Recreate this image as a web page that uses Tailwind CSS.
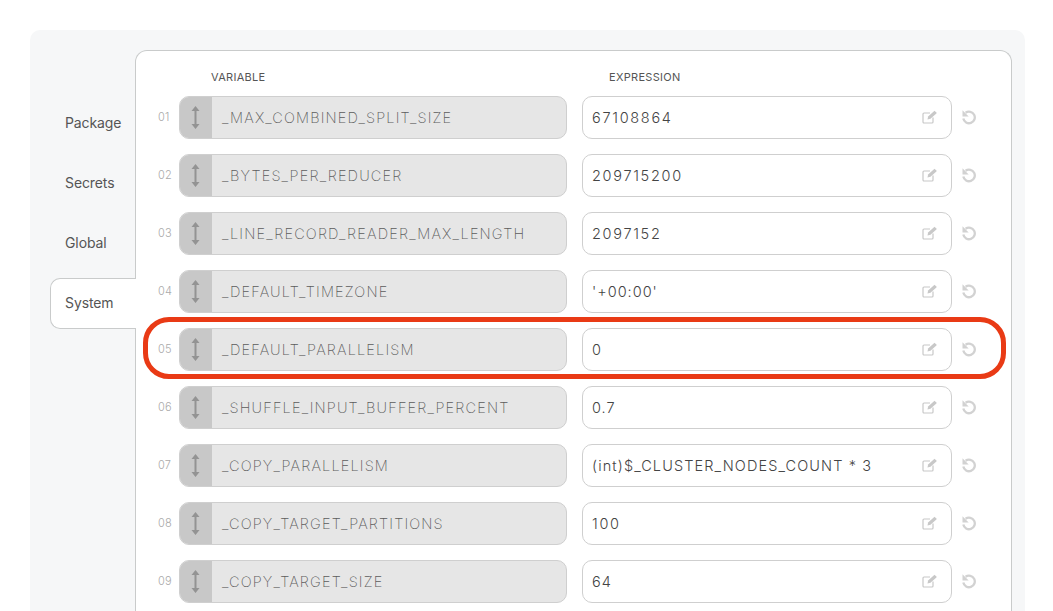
<!DOCTYPE html>
<html>
	<head>
		<meta charset="utf-8" />
		<title>Variables</title>
		<script src="https://cdn.jsdelivr.net/npm/@tailwindcss/browser@4"></script>
	</head>
	<body class="bg-white w-[1053px] h-[611px] overflow-hidden font-['Inter','Noto_Sans',sans-serif]">
		<div class="pt-[30px] pl-[30px] w-[1025px] h-[611px]">
			<div class="relative flex bg-[#f6f7f8] rounded-t-[10px] h-[581px] pt-[20px] pr-[13px]">
				<!-- tabs -->
				<div class="relative z-10 w-[105px] shrink-0 pl-[20px] pt-[42px] flex flex-col items-stretch text-[14px] text-[#555]">
					<div class="h-[60px] pl-[15px] flex items-center tracking-[-0.1px]">Package</div>
					<div class="h-[60px] pl-[15px] flex items-center tracking-[-0.1px]">Secrets</div>
					<div class="h-[60px] pl-[15px] flex items-center tracking-[-0.1px]">Global</div>
					<div class="w-[86px] h-[51px] mt-[6px] pb-[2px] pl-[14px] flex items-center tracking-[-0.1px] bg-white border border-r-0 border-[#c9cbcb] rounded-l-[10px]">System</div>
				</div>
				<!-- card -->
				<div class="flex-1 bg-white border border-b-0 border-[#c9cbcb] rounded-t-[12px] pl-[22px]">
					<div class="flex h-[45px] ml-[21px] items-end pb-[11px] text-[11px] tracking-[0.3px] text-[#555]">
						<span class="w-[403px] pl-[32px]">VARIABLE</span>
						<span class="pl-[27px]">EXPRESSION</span>
					</div>
					<div id="rows" class="flex flex-col gap-[15px]">
						<div class="flex items-center h-[43px]">
							<span class="w-[21px] shrink-0 text-[11px] font-light text-[#aaa] tracking-[0.2px]">01</span>
							<div class="flex w-[388px] h-[43px] rounded-[10px] overflow-hidden bg-[#e6e6e6] border border-[#cfcfcf]">
								<div class="w-[33px] -ml-px -my-px shrink-0 bg-[#c8c8c8] flex items-center justify-center">
									<svg width="9" height="23" viewBox="0 0 9 23" fill="#939393"><path d="M4.5 0 8.5 5H5.5v13h3l-4 5-4-5h3V5h-3z"/></svg>
								</div>
								<div class="pl-[10px] pt-px flex items-center text-[14.5px] leading-[20px] tracking-[1.16px] text-[#5c5c5c] font-extralight">_MAX_COMBINED_SPLIT_SIZE</div>
							</div>
							<div class="flex items-center justify-between w-[370px] h-[43px] ml-[15px] pl-[9px] pr-[13px] rounded-[10px] bg-white border border-[#cfcfcf] text-[14.5px] leading-[20px] font-light tracking-[1.7px] text-[#444]">
								<span class="pt-px">67108864</span>
								<svg class="mb-[2px]" width="16" height="14" viewBox="0 0 16 14" fill="none" stroke="#c8c8c8" stroke-width="1.2"><path d="M11 7.5V12a1 1 0 0 1-1 1H2a1 1 0 0 1-1-1V4a1 1 0 0 1 1-1h6"/><path d="M5.5 9.5l.6-3L12.5 .8l2.4 2.2L8.5 8.8z" fill="#c8c8c8" stroke="none"/></svg>
							</div>
							<svg class="ml-[9px] mb-[2px]" width="16" height="16" viewBox="0 0 16 16" fill="none" stroke="#d2d2d2" stroke-width="2.3"><path d="M4.6 3.7A5.8 5.8 0 1 1 2.3 9.6"/><path d="M1.5 1.2V7.4H7.7z" stroke="none" fill="#d2d2d2"/></svg>
						</div>
						<div class="flex items-center h-[43px]">
							<span class="w-[21px] shrink-0 text-[11px] font-light text-[#aaa] tracking-[0.2px]">02</span>
							<div class="flex w-[388px] h-[43px] rounded-[10px] overflow-hidden bg-[#e6e6e6] border border-[#cfcfcf]">
								<div class="w-[33px] -ml-px -my-px shrink-0 bg-[#c8c8c8] flex items-center justify-center">
									<svg width="9" height="23" viewBox="0 0 9 23" fill="#939393"><path d="M4.5 0 8.5 5H5.5v13h3l-4 5-4-5h3V5h-3z"/></svg>
								</div>
								<div class="pl-[10px] pt-px flex items-center text-[14.5px] leading-[20px] tracking-[1.16px] text-[#5c5c5c] font-extralight">_BYTES_PER_REDUCER</div>
							</div>
							<div class="flex items-center justify-between w-[370px] h-[43px] ml-[15px] pl-[9px] pr-[13px] rounded-[10px] bg-white border border-[#cfcfcf] text-[14.5px] leading-[20px] font-light tracking-[1.7px] text-[#444]">
								<span class="pt-px">209715200</span>
								<svg class="mb-[2px]" width="16" height="14" viewBox="0 0 16 14" fill="none" stroke="#c8c8c8" stroke-width="1.2"><path d="M11 7.5V12a1 1 0 0 1-1 1H2a1 1 0 0 1-1-1V4a1 1 0 0 1 1-1h6"/><path d="M5.5 9.5l.6-3L12.5 .8l2.4 2.2L8.5 8.8z" fill="#c8c8c8" stroke="none"/></svg>
							</div>
							<svg class="ml-[9px] mb-[2px]" width="16" height="16" viewBox="0 0 16 16" fill="none" stroke="#d2d2d2" stroke-width="2.3"><path d="M4.6 3.7A5.8 5.8 0 1 1 2.3 9.6"/><path d="M1.5 1.2V7.4H7.7z" stroke="none" fill="#d2d2d2"/></svg>
						</div>
						<div class="flex items-center h-[43px]">
							<span class="w-[21px] shrink-0 text-[11px] font-light text-[#aaa] tracking-[0.2px]">03</span>
							<div class="flex w-[388px] h-[43px] rounded-[10px] overflow-hidden bg-[#e6e6e6] border border-[#cfcfcf]">
								<div class="w-[33px] -ml-px -my-px shrink-0 bg-[#c8c8c8] flex items-center justify-center">
									<svg width="9" height="23" viewBox="0 0 9 23" fill="#939393"><path d="M4.5 0 8.5 5H5.5v13h3l-4 5-4-5h3V5h-3z"/></svg>
								</div>
								<div class="pl-[10px] pt-px flex items-center text-[14.5px] leading-[20px] tracking-[1.16px] text-[#5c5c5c] font-extralight">_LINE_RECORD_READER_MAX_LENGTH</div>
							</div>
							<div class="flex items-center justify-between w-[370px] h-[43px] ml-[15px] pl-[9px] pr-[13px] rounded-[10px] bg-white border border-[#cfcfcf] text-[14.5px] leading-[20px] font-light tracking-[1.7px] text-[#444]">
								<span class="pt-px">2097152</span>
								<svg class="mb-[2px]" width="16" height="14" viewBox="0 0 16 14" fill="none" stroke="#c8c8c8" stroke-width="1.2"><path d="M11 7.5V12a1 1 0 0 1-1 1H2a1 1 0 0 1-1-1V4a1 1 0 0 1 1-1h6"/><path d="M5.5 9.5l.6-3L12.5 .8l2.4 2.2L8.5 8.8z" fill="#c8c8c8" stroke="none"/></svg>
							</div>
							<svg class="ml-[9px] mb-[2px]" width="16" height="16" viewBox="0 0 16 16" fill="none" stroke="#d2d2d2" stroke-width="2.3"><path d="M4.6 3.7A5.8 5.8 0 1 1 2.3 9.6"/><path d="M1.5 1.2V7.4H7.7z" stroke="none" fill="#d2d2d2"/></svg>
						</div>
						<div class="flex items-center h-[43px]">
							<span class="w-[21px] shrink-0 text-[11px] font-light text-[#aaa] tracking-[0.2px]">04</span>
							<div class="flex w-[388px] h-[43px] rounded-[10px] overflow-hidden bg-[#e6e6e6] border border-[#cfcfcf]">
								<div class="w-[33px] -ml-px -my-px shrink-0 bg-[#c8c8c8] flex items-center justify-center">
									<svg width="9" height="23" viewBox="0 0 9 23" fill="#939393"><path d="M4.5 0 8.5 5H5.5v13h3l-4 5-4-5h3V5h-3z"/></svg>
								</div>
								<div class="pl-[10px] pt-px flex items-center text-[14.5px] leading-[20px] tracking-[1.16px] text-[#5c5c5c] font-extralight">_DEFAULT_TIMEZONE</div>
							</div>
							<div class="flex items-center justify-between w-[370px] h-[43px] ml-[15px] pl-[9px] pr-[13px] rounded-[10px] bg-white border border-[#cfcfcf] text-[14.5px] leading-[20px] font-light tracking-[1px] text-[#444]">
								<span class="pt-px">'+00:00'</span>
								<svg class="mb-[2px]" width="16" height="14" viewBox="0 0 16 14" fill="none" stroke="#c8c8c8" stroke-width="1.2"><path d="M11 7.5V12a1 1 0 0 1-1 1H2a1 1 0 0 1-1-1V4a1 1 0 0 1 1-1h6"/><path d="M5.5 9.5l.6-3L12.5 .8l2.4 2.2L8.5 8.8z" fill="#c8c8c8" stroke="none"/></svg>
							</div>
							<svg class="ml-[9px] mb-[2px]" width="16" height="16" viewBox="0 0 16 16" fill="none" stroke="#d2d2d2" stroke-width="2.3"><path d="M4.6 3.7A5.8 5.8 0 1 1 2.3 9.6"/><path d="M1.5 1.2V7.4H7.7z" stroke="none" fill="#d2d2d2"/></svg>
						</div>
						<div class="flex items-center h-[43px]">
							<span class="w-[21px] shrink-0 text-[11px] font-light text-[#aaa] tracking-[0.2px]">05</span>
							<div class="flex w-[388px] h-[43px] rounded-[10px] overflow-hidden bg-[#e6e6e6] border border-[#cfcfcf]">
								<div class="w-[33px] -ml-px -my-px shrink-0 bg-[#c8c8c8] flex items-center justify-center">
									<svg width="9" height="23" viewBox="0 0 9 23" fill="#939393"><path d="M4.5 0 8.5 5H5.5v13h3l-4 5-4-5h3V5h-3z"/></svg>
								</div>
								<div class="pl-[10px] pt-px flex items-center text-[14.5px] leading-[20px] tracking-[1.16px] text-[#5c5c5c] font-extralight">_DEFAULT_PARALLELISM</div>
							</div>
							<div class="flex items-center justify-between w-[370px] h-[43px] ml-[15px] pl-[9px] pr-[13px] rounded-[10px] bg-white border border-[#cfcfcf] text-[14.5px] leading-[20px] font-light tracking-[1px] text-[#444]">
								<span class="pt-px">0</span>
								<svg class="mb-[2px]" width="16" height="14" viewBox="0 0 16 14" fill="none" stroke="#c8c8c8" stroke-width="1.2"><path d="M11 7.5V12a1 1 0 0 1-1 1H2a1 1 0 0 1-1-1V4a1 1 0 0 1 1-1h6"/><path d="M5.5 9.5l.6-3L12.5 .8l2.4 2.2L8.5 8.8z" fill="#c8c8c8" stroke="none"/></svg>
							</div>
							<svg class="ml-[9px] mb-[2px]" width="16" height="16" viewBox="0 0 16 16" fill="none" stroke="#d2d2d2" stroke-width="2.3"><path d="M4.6 3.7A5.8 5.8 0 1 1 2.3 9.6"/><path d="M1.5 1.2V7.4H7.7z" stroke="none" fill="#d2d2d2"/></svg>
						</div>
						<div class="flex items-center h-[43px]">
							<span class="w-[21px] shrink-0 text-[11px] font-light text-[#aaa] tracking-[0.2px]">06</span>
							<div class="flex w-[388px] h-[43px] rounded-[10px] overflow-hidden bg-[#e6e6e6] border border-[#cfcfcf]">
								<div class="w-[33px] -ml-px -my-px shrink-0 bg-[#c8c8c8] flex items-center justify-center">
									<svg width="9" height="23" viewBox="0 0 9 23" fill="#939393"><path d="M4.5 0 8.5 5H5.5v13h3l-4 5-4-5h3V5h-3z"/></svg>
								</div>
								<div class="pl-[10px] pt-px flex items-center text-[14.5px] leading-[20px] tracking-[1.16px] text-[#5c5c5c] font-extralight">_SHUFFLE_INPUT_BUFFER_PERCENT</div>
							</div>
							<div class="flex items-center justify-between w-[370px] h-[43px] ml-[15px] pl-[9px] pr-[13px] rounded-[10px] bg-white border border-[#cfcfcf] text-[14.5px] leading-[20px] font-light tracking-[1px] text-[#444]">
								<span class="pt-px">0.7</span>
								<svg class="mb-[2px]" width="16" height="14" viewBox="0 0 16 14" fill="none" stroke="#c8c8c8" stroke-width="1.2"><path d="M11 7.5V12a1 1 0 0 1-1 1H2a1 1 0 0 1-1-1V4a1 1 0 0 1 1-1h6"/><path d="M5.5 9.5l.6-3L12.5 .8l2.4 2.2L8.5 8.8z" fill="#c8c8c8" stroke="none"/></svg>
							</div>
							<svg class="ml-[9px] mb-[2px]" width="16" height="16" viewBox="0 0 16 16" fill="none" stroke="#d2d2d2" stroke-width="2.3"><path d="M4.6 3.7A5.8 5.8 0 1 1 2.3 9.6"/><path d="M1.5 1.2V7.4H7.7z" stroke="none" fill="#d2d2d2"/></svg>
						</div>
						<div class="flex items-center h-[43px]">
							<span class="w-[21px] shrink-0 text-[11px] font-light text-[#aaa] tracking-[0.2px]">07</span>
							<div class="flex w-[388px] h-[43px] rounded-[10px] overflow-hidden bg-[#e6e6e6] border border-[#cfcfcf]">
								<div class="w-[33px] -ml-px -my-px shrink-0 bg-[#c8c8c8] flex items-center justify-center">
									<svg width="9" height="23" viewBox="0 0 9 23" fill="#939393"><path d="M4.5 0 8.5 5H5.5v13h3l-4 5-4-5h3V5h-3z"/></svg>
								</div>
								<div class="pl-[10px] pt-px flex items-center text-[14.5px] leading-[20px] tracking-[1.16px] text-[#5c5c5c] font-extralight">_COPY_PARALLELISM</div>
							</div>
							<div class="flex items-center justify-between w-[370px] h-[43px] ml-[15px] pl-[9px] pr-[13px] rounded-[10px] bg-white border border-[#cfcfcf] text-[14.5px] leading-[20px] font-light tracking-[1.11px] text-[#444]">
								<span class="pt-px">(int)$_CLUSTER_NODES_COUNT * 3</span>
								<svg class="mb-[2px]" width="16" height="14" viewBox="0 0 16 14" fill="none" stroke="#c8c8c8" stroke-width="1.2"><path d="M11 7.5V12a1 1 0 0 1-1 1H2a1 1 0 0 1-1-1V4a1 1 0 0 1 1-1h6"/><path d="M5.5 9.5l.6-3L12.5 .8l2.4 2.2L8.5 8.8z" fill="#c8c8c8" stroke="none"/></svg>
							</div>
							<svg class="ml-[9px] mb-[2px]" width="16" height="16" viewBox="0 0 16 16" fill="none" stroke="#d2d2d2" stroke-width="2.3"><path d="M4.6 3.7A5.8 5.8 0 1 1 2.3 9.6"/><path d="M1.5 1.2V7.4H7.7z" stroke="none" fill="#d2d2d2"/></svg>
						</div>
						<div class="flex items-center h-[43px]">
							<span class="w-[21px] shrink-0 text-[11px] font-light text-[#aaa] tracking-[0.2px]">08</span>
							<div class="flex w-[388px] h-[43px] rounded-[10px] overflow-hidden bg-[#e6e6e6] border border-[#cfcfcf]">
								<div class="w-[33px] -ml-px -my-px shrink-0 bg-[#c8c8c8] flex items-center justify-center">
									<svg width="9" height="23" viewBox="0 0 9 23" fill="#939393"><path d="M4.5 0 8.5 5H5.5v13h3l-4 5-4-5h3V5h-3z"/></svg>
								</div>
								<div class="pl-[10px] pt-px flex items-center text-[14.5px] leading-[20px] tracking-[1.16px] text-[#5c5c5c] font-extralight">_COPY_TARGET_PARTITIONS</div>
							</div>
							<div class="flex items-center justify-between w-[370px] h-[43px] ml-[15px] pl-[9px] pr-[13px] rounded-[10px] bg-white border border-[#cfcfcf] text-[14.5px] leading-[20px] font-light tracking-[1.7px] text-[#444]">
								<span class="pt-px">100</span>
								<svg class="mb-[2px]" width="16" height="14" viewBox="0 0 16 14" fill="none" stroke="#c8c8c8" stroke-width="1.2"><path d="M11 7.5V12a1 1 0 0 1-1 1H2a1 1 0 0 1-1-1V4a1 1 0 0 1 1-1h6"/><path d="M5.5 9.5l.6-3L12.5 .8l2.4 2.2L8.5 8.8z" fill="#c8c8c8" stroke="none"/></svg>
							</div>
							<svg class="ml-[9px] mb-[2px]" width="16" height="16" viewBox="0 0 16 16" fill="none" stroke="#d2d2d2" stroke-width="2.3"><path d="M4.6 3.7A5.8 5.8 0 1 1 2.3 9.6"/><path d="M1.5 1.2V7.4H7.7z" stroke="none" fill="#d2d2d2"/></svg>
						</div>
						<div class="flex items-center h-[43px]">
							<span class="w-[21px] shrink-0 text-[11px] font-light text-[#aaa] tracking-[0.2px]">09</span>
							<div class="flex w-[388px] h-[43px] rounded-[10px] overflow-hidden bg-[#e6e6e6] border border-[#cfcfcf]">
								<div class="w-[33px] -ml-px -my-px shrink-0 bg-[#c8c8c8] flex items-center justify-center">
									<svg width="9" height="23" viewBox="0 0 9 23" fill="#939393"><path d="M4.5 0 8.5 5H5.5v13h3l-4 5-4-5h3V5h-3z"/></svg>
								</div>
								<div class="pl-[10px] pt-px flex items-center text-[14.5px] leading-[20px] tracking-[1.16px] text-[#5c5c5c] font-extralight">_COPY_TARGET_SIZE</div>
							</div>
							<div class="flex items-center justify-between w-[370px] h-[43px] ml-[15px] pl-[9px] pr-[13px] rounded-[10px] bg-white border border-[#cfcfcf] text-[14.5px] leading-[20px] font-light tracking-[1px] text-[#444]">
								<span class="pt-px">64</span>
								<svg class="mb-[2px]" width="16" height="14" viewBox="0 0 16 14" fill="none" stroke="#c8c8c8" stroke-width="1.2"><path d="M11 7.5V12a1 1 0 0 1-1 1H2a1 1 0 0 1-1-1V4a1 1 0 0 1 1-1h6"/><path d="M5.5 9.5l.6-3L12.5 .8l2.4 2.2L8.5 8.8z" fill="#c8c8c8" stroke="none"/></svg>
							</div>
							<svg class="ml-[9px] mb-[2px]" width="16" height="16" viewBox="0 0 16 16" fill="none" stroke="#d2d2d2" stroke-width="2.3"><path d="M4.6 3.7A5.8 5.8 0 1 1 2.3 9.6"/><path d="M1.5 1.2V7.4H7.7z" stroke="none" fill="#d2d2d2"/></svg>
						</div>
					</div>
				</div>
				<!-- highlight around row 05 -->
				<div class="absolute left-[113px] top-[287px] w-[863px] h-[62px] border-[5px] border-[#e93a15] rounded-[26px]"></div>
			</div>
		</div>
	</body>
</html>
